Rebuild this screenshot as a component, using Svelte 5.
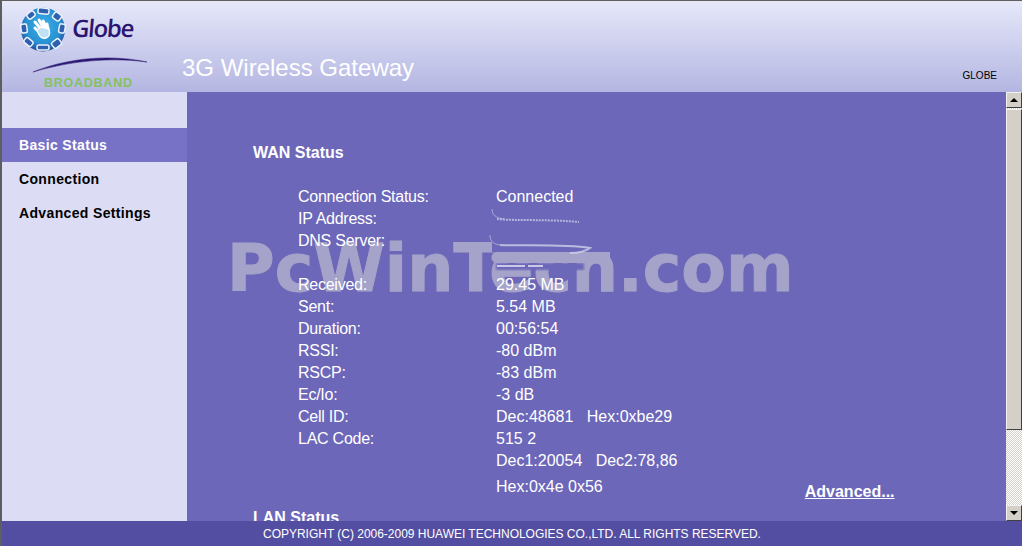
<script>
  const nav = [
    { label: "Basic Status", active: true },
    { label: "Connection" },
    { label: "Advanced Settings" }
  ];

  const rows = [
    ["Connection Status:", "Connected"],
    ["IP Address:", ""],
    ["DNS Server:", ""],
    ["", ""],
    ["Received:", "29.45 MB"],
    ["Sent:", "5.54 MB"],
    ["Duration:", "00:56:54"],
    ["RSSI:", "-80 dBm"],
    ["RSCP:", "-83 dBm"],
    ["Ec/Io:", "-3 dB"],
    ["Cell ID:", "Dec:48681\u00a0\u00a0\u00a0Hex:0xbe29"],
    ["LAC Code:", "515 2"],
    ["", "Dec1:20054\u00a0\u00a0\u00a0Dec2:78,86"]
  ];

  // rings around the edge of the globe logo: x, y, w, h, rotation
  const rings = [
    [38, 8, 11, 6, 6],
    [27, 12, 8, 6, -38],
    [53, 13, 8, 7, 35],
    [59, 24, 6, 9, 10],
    [21, 24, 6, 9, -8],
    [24, 39, 9, 6, 40],
    [37, 45, 12, 5, 0],
    [52, 40, 9, 7, -38]
  ];
</script>

<div class="window">
  <header class="top">
    <div class="logo">
      <svg width="150" height="92" viewBox="0 0 150 92">
        <defs>
          <radialGradient id="ball" cx="0.5" cy="0.42" r="0.62">
            <stop offset="0" stop-color="#3db0e6" />
            <stop offset="0.65" stop-color="#2790d2" />
            <stop offset="1" stop-color="#2a3c8c" />
          </radialGradient>
        </defs>
        <circle cx="43" cy="29.500" r="22" fill="url(#ball)" />
        {#each rings as [x, y, w, h, r]}
          <rect
            {x}
            {y}
            width={w}
            height={h}
            rx="2"
            fill="#2f5fae"
            stroke="#e8f2fa"
            stroke-width="1.500"
            transform="rotate({r} {x + w / 2} {y + h / 2})" />
        {/each}
        <g fill="none" stroke-linecap="round">
          <path d="M35 22l5 6M39 20l4 7M43 21l3 6M47 24l1 5M35 28l4 4" stroke="#fff" stroke-width="3" />
          <path d="M37 30c2 7 5 9 9 8s4-5 3-9l-8-2z" fill="#bfe0f5" stroke="#fff" stroke-width="1.300" />
        </g>
        <text transform="translate(71.500 37) skewX(-5)" class="brand">Globe</text>
        <path d="M33 72C62 60 105 53 147 62C110 57 70 61 33 72z" fill="#2a1670" stroke="#2a1670" stroke-width="0.500" />
        <text x="44" y="87" class="sub">BROADBAND</text>
      </svg>
    </div>
    <div class="title">3G Wireless Gateway</div>
    <div class="user">GLOBE</div>
  </header>

  <div class="middle">
    <nav class="side">
      {#each nav as item}
        <div class="nav-item" class:active={item.active}>{item.label}</div>
      {/each}
    </nav>

    <main class="content">
      <div class="pane">
        <h2>WAN Status</h2>
        <div class="rows">
          {#each rows as [name, value]}
            <div class="row">
              <span class="name">{name}</span>
              <span>{value}</span>
            </div>
          {/each}
          <div class="row last">
            <span class="name"></span>
            <span>Hex:0x4e 0x56</span>
            <a href="#advanced">Advanced...</a>
          </div>
        </div>
        <h2 class="lan">LAN Status</h2>
      </div>

      <div class="scrollbar">
        <div class="sb-btn"><span class="up"></span></div>
        <div class="thumb"></div>
        <div class="track"></div>
        <div class="sb-btn"><span class="down"></span></div>
      </div>
    </main>
  </div>

  <footer class="foot">COPYRIGHT (C) 2006-2009 HUAWEI TECHNOLOGIES CO.,LTD. ALL RIGHTS RESERVED.</footer>

  <div class="mark">PcWinTech.com</div>
  <svg class="smear" width="1022" height="546" viewBox="0 0 1022 546">
    <defs>
      <filter id="soft"><feGaussianBlur stdDeviation="0.6" /></filter>
      <filter id="softer"><feGaussianBlur stdDeviation="1" /></filter>
    </defs>
    <!-- purple patch where the address was rubbed out over the watermark -->
    <path d="M492 236h112v16h-112z" fill="#6c67b9" />
    <path d="M496 263h88v7h-88z" fill="#6c67b9" filter="url(#softer)" />
    <path d="M497 252h113v11h-113a5.500 5.500 0 0 1 0-11z" fill="#a5a3c9" />
    <g filter="url(#soft)" fill="none" stroke="#cfcfe8">
      <path d="M492 209c0 6 4 9 12 10" stroke-width="1" opacity="0.6" />
      <path d="M497 219c20 2 50 0 82 3" stroke-width="2" stroke-dasharray="2 1" opacity="0.75" />
      <path d="M490 235c0 6 3 9 10 10" stroke-width="1" opacity="0.6" />
      <path d="M500 245c30 1 65-1 90 3c-4 3-12 5-20 5" stroke-width="2" opacity="0.8" />
    </g>
    <path d="M497 266h46" stroke="#e8e8f6" stroke-width="1.500" stroke-dasharray="28 3 15" fill="none" />
  </svg>
</div>

<style>
  :global(body) {
    margin: 0;
    overflow: hidden;
  }

  .window {
    position: relative;
    width: 1022px;
    height: 546px;
    box-sizing: border-box;
    border-top: 1px solid #5e5e5e;
    border-left: 2px solid #5e5e5e;
    display: flex;
    flex-direction: column;
    font-family: "Liberation Sans", Arial, sans-serif;
    overflow: hidden;
  }

  .top {
    height: 91px;
    flex: none;
    display: flex;
    align-items: flex-start;
    background: linear-gradient(#e6e8fa, #b4b6e2);
  }

  .logo {
    width: 182px;
    height: 91px;
    margin-left: -2px;
    margin-top: -1px;
    flex: none;
  }

  .brand {
    font: 600 24px "Open Sans", "Liberation Sans", sans-serif;
    fill: #2a1670;
    letter-spacing: -1.300px;
  }

  .sub {
    font: bold 12.500px "Liberation Sans", sans-serif;
    fill: #83c25f;
    letter-spacing: 0.750px;
  }

  .title {
    flex: 1;
    padding-top: 53px;
    font-size: 24px;
    line-height: 28px;
    color: #fff;
  }

  .user {
    padding: 68px 25px 0 0;
    font-size: 10px;
    line-height: 13px;
    color: #000;
  }

  .middle {
    flex: 1;
    min-height: 0;
    display: flex;
  }

  .side {
    width: 185px;
    flex: none;
    padding-top: 36px;
    box-sizing: border-box;
    background: #dcdcf5;
    font-size: 14px;
    font-weight: bold;
    letter-spacing: 0.35px;
    color: #000;
  }

  .nav-item {
    height: 34px;
    line-height: 34px;
    padding-left: 17px;
  }

  .nav-item.active {
    background: #7872c6;
    color: #fff;
  }

  .content {
    flex: 1;
    min-width: 0;
    display: flex;
    background: #6c67b9;
  }

  .pane {
    flex: 1;
    min-width: 0;
    overflow: hidden;
    padding: 51px 0 0 66px;
    color: #fff;
  }

  h2 {
    margin: 0;
    font-size: 16px;
    line-height: 20px;
    font-weight: bold;
  }

  .rows {
    position: relative;
    z-index: 2;
    margin: 23px 0 0 45px;
    font-size: 16px;
    font-weight: normal;
  }

  .row {
    display: flex;
    height: 22px;
    line-height: 22px;
    white-space: nowrap;
  }

  .name {
    width: 198px;
    flex: none;
    letter-spacing: -0.25px;
  }

  .row.last {
    margin-top: 4px;
    height: 22px;
  }

  .row a {
    margin-left: 202px;
    color: #fff;
    text-decoration: underline;
    font-weight: bold;
    position: relative;
    top: 5px;
  }

  .lan {
    margin-top: 10px;
  }

  .scrollbar {
    width: 16px;
    flex: none;
    display: flex;
    flex-direction: column;
    background-color: #f1efe9;
    background-image: repeating-conic-gradient(#d4d0c8 0 25%, #fff 0 50%);
    background-size: 2px 2px;
  }

  .sb-btn,
  .thumb {
    box-sizing: border-box;
    background: #d4d0c8;
    border: 1px solid;
    border-color: #f4f2ee #404040 #404040 #f4f2ee;
  }

  .sb-btn {
    height: 16px;
    flex: none;
    display: flex;
    align-items: center;
    justify-content: center;
  }

  .thumb {
    height: 321px;
    margin-top: 1px;
    flex: none;
  }

  .track {
    flex: 1;
  }

  .up,
  .down {
    width: 0;
    height: 0;
    border-left: 4px solid transparent;
    border-right: 4px solid transparent;
  }

  .up {
    border-bottom: 4px solid #000;
  }

  .down {
    border-top: 4px solid #000;
  }

  .foot {
    height: 25px;
    flex: none;
    margin-left: -2px;
    background: #544ea2;
    color: #fff;
    font-size: 12px;
    line-height: 27px;
    padding-left: 263px;
    letter-spacing: -0.015px;
    white-space: nowrap;
  }

  .smear {
    position: absolute;
    left: -2px;
    top: -1px;
    pointer-events: none;
  }

  .mark {
    position: absolute;
    left: 225px;
    top: 230px;
    font-family: "DejaVu Sans", Verdana, sans-serif;
    font-size: 65px;
    line-height: 76px;
    font-weight: bold;
    color: #a5a3c9;
    -webkit-text-stroke: 1px #a5a3c9;
    white-space: nowrap;
    pointer-events: none;
  }
</style>
